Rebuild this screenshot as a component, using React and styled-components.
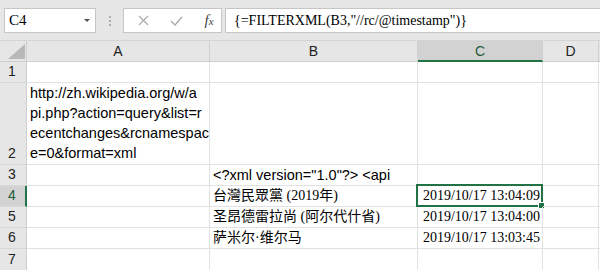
import React from "react";
import styled, { createGlobalStyle } from "styled-components";

const Global = createGlobalStyle`
  html, body { margin: 0; padding: 0; background: #fff; overflow: hidden; }
  #root { width: 600px; height: 270px; overflow: hidden; }
`;

const SANS = `"Liberation Sans", Arial, sans-serif`;
const SERIF = `"Liberation Serif", "Noto Sans CJK TC", serif`;
const GREEN = "#217346";

const Page = styled.div`
  width: 600px;
  height: 270px;
  display: flex;
  flex-direction: column;
  background: #fff;
`;

const Toolbar = styled.div`
  height: 41px;
  flex: none;
  background: #e6e6e6;
  border-bottom: 1px solid #d4d4d4;
  display: flex;
  align-items: flex-start;
  padding: 8px 0 0 4px;
  box-sizing: border-box;
`;

const NameBox = styled.div`
  width: 92px;
  height: 25px;
  box-sizing: border-box;
  background: #fff;
  border: 1px solid #c6c6c6;
  display: flex;
  align-items: center;
  justify-content: space-between;
  padding: 0 5px 0 4px;
  font-family: ${SERIF};
  font-size: 15px;
  color: #000;
`;

const Caret = styled.span`
  width: 0;
  height: 0;
  border-left: 3px solid transparent;
  border-right: 3px solid transparent;
  border-top: 3px solid #555;
`;

const Grip = styled.div`
  width: 27px;
  height: 25px;
  display: flex;
  flex-direction: column;
  align-items: center;
  justify-content: center;
  gap: 2px;
  span {
    width: 2px;
    height: 2px;
    background: #9a9a9a;
    border-radius: 1px;
  }
`;

const ButtonPanel = styled.div`
  width: 99px;
  height: 25px;
  box-sizing: border-box;
  background: #fff;
  border: 1px solid #c6c6c6;
  display: flex;
  align-items: center;
  padding-left: 10px;
  gap: 15px;
`;

const IconBtn = styled.span`
  width: 18px;
  display: flex;
  justify-content: center;
  align-items: center;
`;

const Fx = styled.span`
  font-family: "Liberation Serif", serif;
  font-style: italic;
  color: #444;
  font-size: 15px;
  line-height: 1;
  small { font-size: 11px; }
`;

const FormulaInput = styled.div`
  flex: 1;
  margin-left: 3px;
  height: 25px;
  box-sizing: border-box;
  background: #fff;
  border: 1px solid #c6c6c6;
  border-right: none;
  padding-left: 8px;
  display: flex;
  align-items: center;
  font-family: ${SERIF};
  font-size: 14px;
  color: #000;
  white-space: nowrap;
`;

const Sheet = styled.div`
  display: grid;
  grid-template-columns: 27px 183px 208px 125px 56px 1fr;
  grid-template-rows: 21px 21px 82px 21px 21px 21px 21px 22px;
`;

const Cell = styled.div`
  position: relative;
  box-sizing: border-box;
  border-right: 1px solid #e1e1e1;
  border-bottom: 1px solid #e1e1e1;
  display: flex;
  align-items: flex-end;
  justify-content: ${(p) => (p.$right ? "flex-end" : "flex-start")};
  padding: 0 ${(p) => (p.$right ? "2px" : "0")} 0 3px;
  font-family: ${(p) => (p.$serif ? SERIF : SANS)};
  font-size: ${(p) => (p.$serif ? "14px" : "14.5px")};
  line-height: 20px;
  color: #000;
  white-space: nowrap;
  overflow: visible;
`;

const Wrapped = styled.div`
  white-space: nowrap;
  line-height: 20px;
  padding-bottom: 1px;
`;

const ColHeader = styled.div`
  box-sizing: border-box;
  background: ${(p) => (p.$active ? "#d2d2d2" : "#e6e6e6")};
  border-right: 1px solid #cfcfcf;
  border-bottom: ${(p) => (p.$active ? `2px solid ${GREEN}` : "1px solid #cfcfcf")};
  display: flex;
  align-items: center;
  justify-content: center;
  font-family: ${SANS};
  font-size: 14px;
  color: ${(p) => (p.$active ? "#1e5c3a" : "#222")};
`;

const RowHeader = styled.div`
  box-sizing: border-box;
  background: ${(p) => (p.$active ? "#d2d2d2" : "#e6e6e6")};
  border-right: ${(p) => (p.$active ? `2px solid ${GREEN}` : "1px solid #cfcfcf")};
  border-bottom: 1px solid #d6d6d6;
  display: flex;
  align-items: flex-end;
  justify-content: center;
  padding-bottom: 1px;
  padding-right: ${(p) => (p.$active ? "1px" : "2px")};
  font-family: ${SANS};
  font-size: 14px;
  line-height: 19px;
  color: ${(p) => (p.$active ? "#1e5c3a" : "#222")};
`;

const Corner = styled.div`
  box-sizing: border-box;
  background: #e6e6e6;
  border-right: 1px solid #cfcfcf;
  border-bottom: 1px solid #cfcfcf;
  display: flex;
  align-items: flex-end;
  justify-content: flex-end;
  padding: 0 1px 2px 0;
`;

const Selection = styled.div`
  position: absolute;
  left: -2px;
  top: -2px;
  right: -1px;
  bottom: -1px;
  border: 2px solid ${GREEN};
  pointer-events: none;
  &::after {
    content: "";
    position: absolute;
    right: -4px;
    bottom: -4px;
    width: 5px;
    height: 5px;
    background: ${GREEN};
    border: 1px solid #fff;
  }
`;

const cols = ["A", "B", "C", "D", ""];

const rows = [
  { n: 1, a: null, b: "", c: "" },
  {
    n: 2,
    a: [
      "http://zh.wikipedia.org/w/a",
      "pi.php?action=query&list=r",
      "ecentchanges&rcnamespac",
      "e=0&format=xml",
    ],
    b: "",
    c: "",
  },
  { n: 3, a: null, b: '<?xml version="1.0"?> <api', bSans: true, c: "" },
  { n: 4, a: null, b: "台灣民眾黨 (2019年)", c: "2019/10/17 13:04:09", active: true },
  { n: 5, a: null, b: "圣昂德雷拉尚 (阿尔代什省)", c: "2019/10/17 13:04:00" },
  { n: 6, a: null, b: "萨米尔·维尔马", c: "2019/10/17 13:03:45" },
  { n: 7, a: null, b: "", c: "" },
];

export default function App() {
  return (
    <Page>
      <Global />
      <Toolbar>
        <NameBox>
          C4
          <Caret />
        </NameBox>
        <Grip>
          <span />
          <span />
          <span />
        </Grip>
        <ButtonPanel>
          <IconBtn>
            <svg width="11" height="11" viewBox="0 0 11 11">
              <path d="M1 1 L10 10 M10 1 L1 10" stroke="#a8a8a8" strokeWidth="1.1" fill="none" />
            </svg>
          </IconBtn>
          <IconBtn>
            <svg width="13" height="10" viewBox="0 0 13 10">
              <path d="M1 5 L5 9 L12 1" stroke="#a8a8a8" strokeWidth="1.3" fill="none" />
            </svg>
          </IconBtn>
          <IconBtn>
            <Fx>
              f<small>x</small>
            </Fx>
          </IconBtn>
        </ButtonPanel>
        <FormulaInput>{'{=FILTERXML(B3,"//rc/@timestamp")}'}</FormulaInput>
      </Toolbar>
      <Sheet>
        <Corner>
          <svg width="17" height="15" viewBox="0 0 17 15">
            <polygon points="17,0 17,15 0,15" fill="#b8b8b8" />
          </svg>
        </Corner>
        {cols.map((c, i) => (
          <ColHeader key={i} $active={c === "C"}>
            {c}
          </ColHeader>
        ))}
        {rows.map((r) => (
          <React.Fragment key={r.n}>
            <RowHeader $active={r.active}>{r.n}</RowHeader>
            <Cell>
              {r.a && (
                <Wrapped>
                  {r.a.map((line, i) => (
                    <div key={i}>{line}</div>
                  ))}
                </Wrapped>
              )}
            </Cell>
            <Cell $serif={!r.bSans}>{r.b}</Cell>
            <Cell $serif $right>
              {r.c}
              {r.active && <Selection />}
            </Cell>
            <Cell />
            <Cell />
          </React.Fragment>
        ))}
      </Sheet>
    </Page>
  );
}
